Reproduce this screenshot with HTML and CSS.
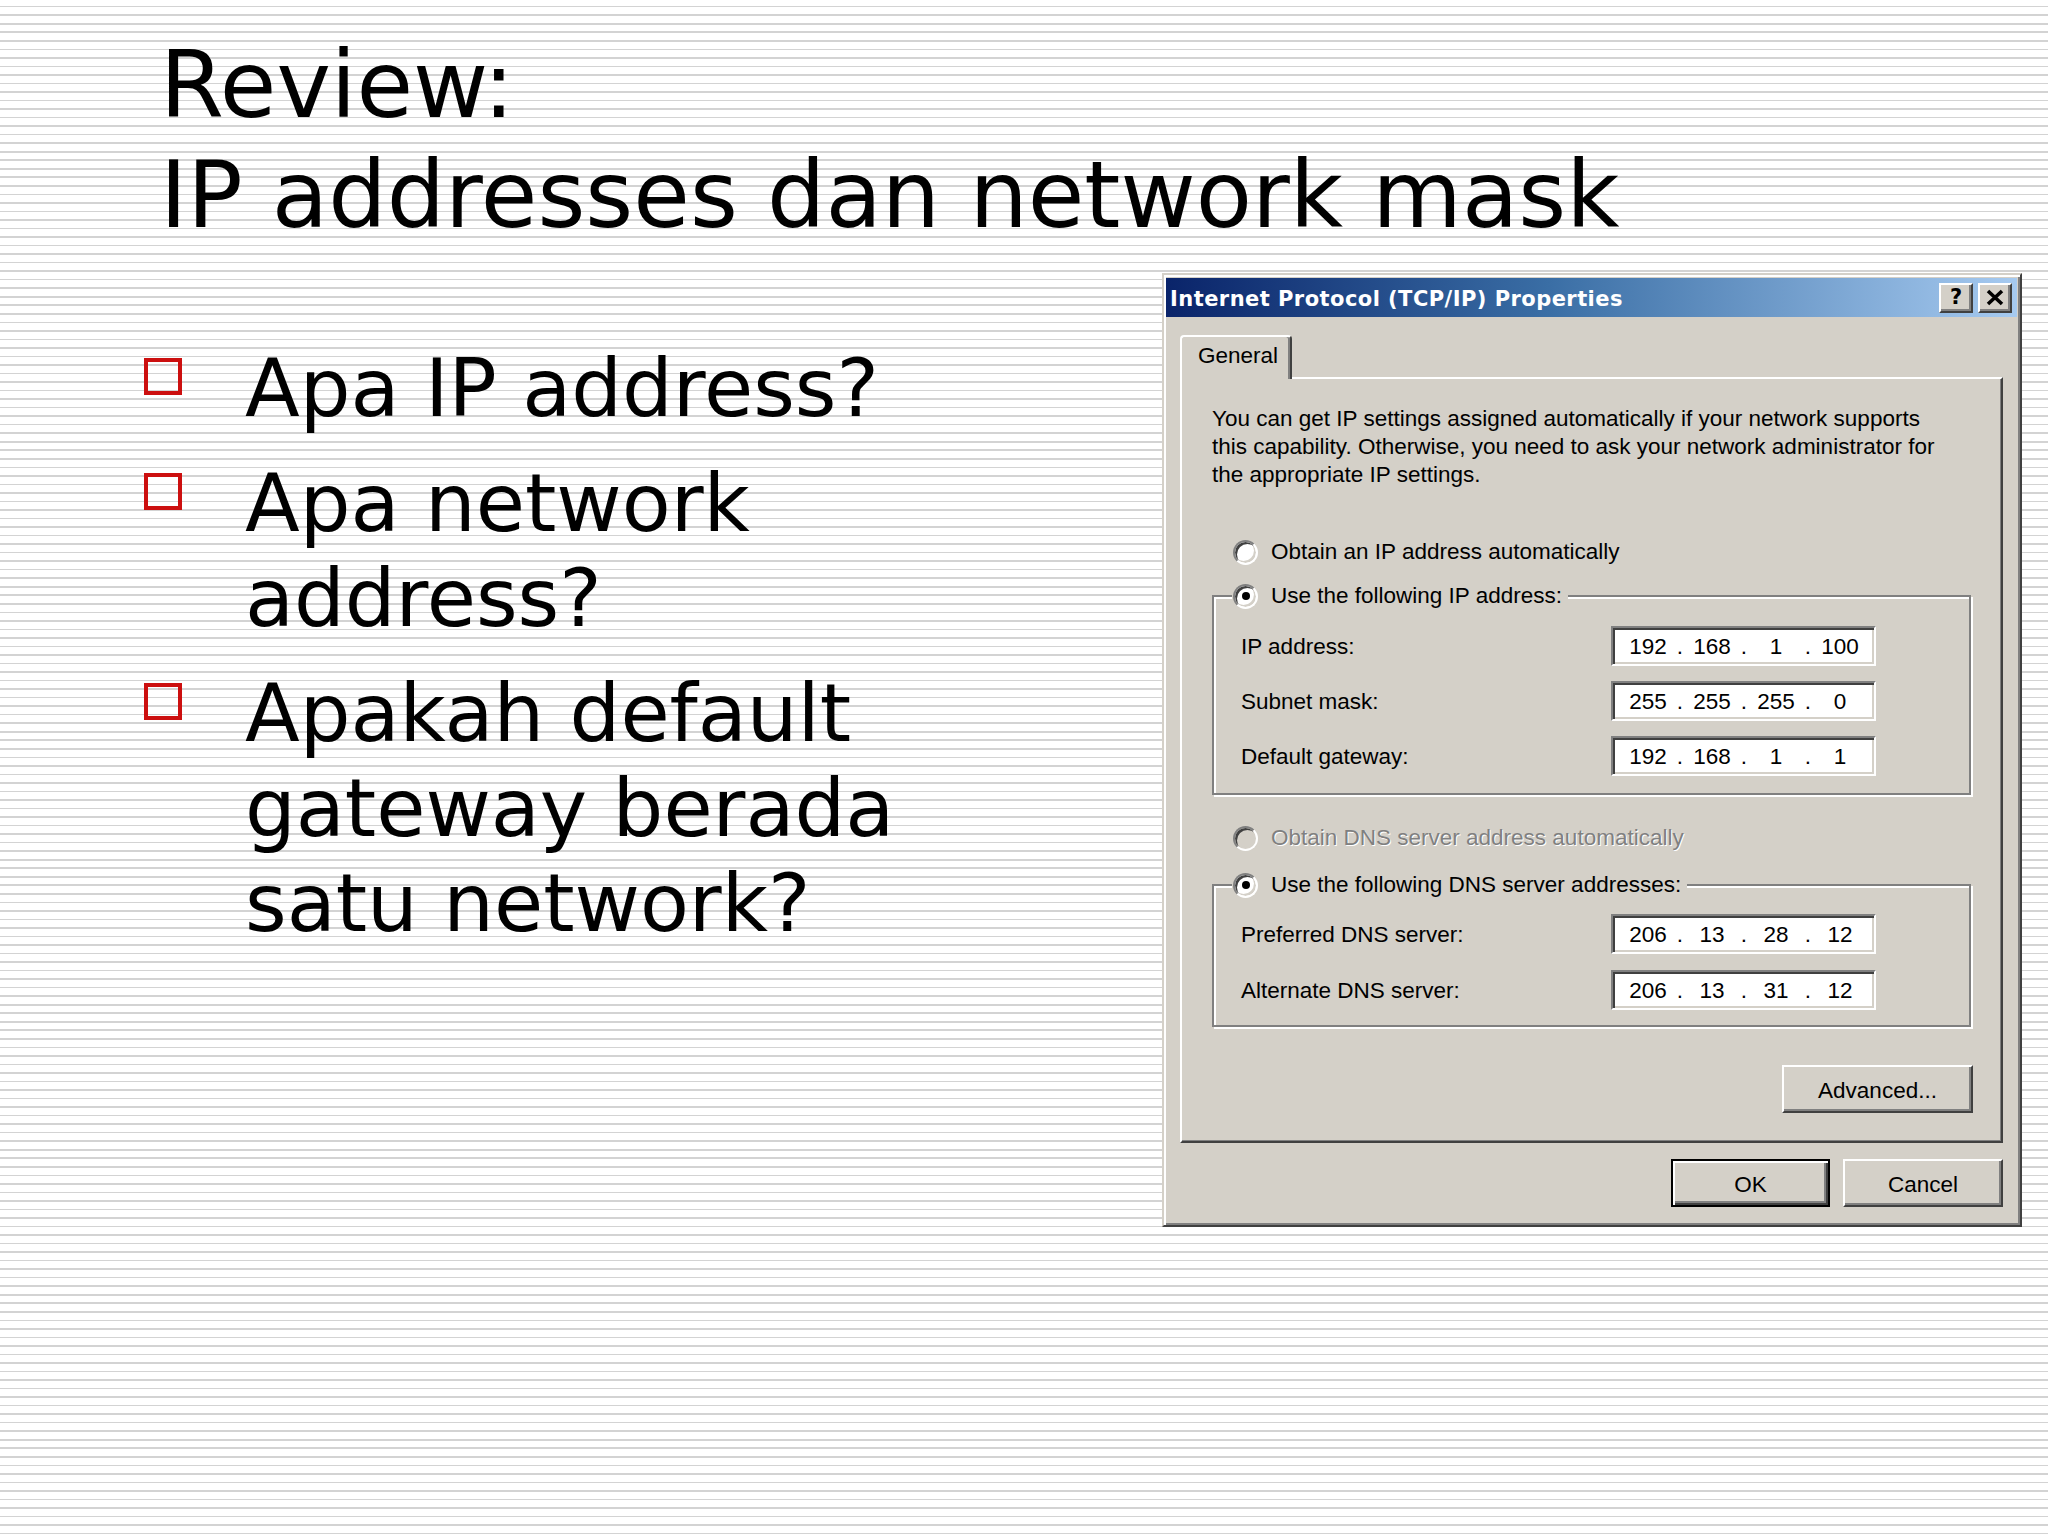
FILE: index.html
```html
<!DOCTYPE html>
<html lang="id">
<head>
<meta charset="utf-8">
<title>Review: IP addresses dan network mask</title>
<link rel="stylesheet" href="styles.css">
</head>
<body>
<div class="slide">
  <h1 class="title">Review:<br>IP addresses dan network mask</h1>
  <div class="content">
    <ul class="bullets">
      <li><span>Apa IP address?</span></li>
      <li><span>Apa network address?</span></li>
      <li><span>Apakah default gateway berada satu network?</span></li>
    </ul>

    <div class="dialog">
      <div class="titlebar">
        <span class="title-text">Internet Protocol (TCP/IP) Properties</span>
        <div class="caption-buttons">
          <span class="cap-btn help">?</span>
          <span class="cap-btn close"><svg width="20" height="17" viewBox="0 0 20 17"><path d="M3 2 L17 15 M17 2 L3 15" stroke="#000" stroke-width="3.6" fill="none"/></svg></span>
        </div>
      </div>
      <div class="dlg-body">
        <div class="tabs"><div class="tab">General</div></div>
        <div class="panel">
          <p class="desc">You can get IP settings assigned automatically if your network supports<br>this capability. Otherwise, you need to ask your network administrator for<br>the appropriate IP settings.</p>

          <div class="radio-row r-ip"><span class="radio"></span><span class="rlabel">Obtain an IP address automatically</span></div>

          <div class="group g-ip">
            <div class="legend"><span class="radio checked"></span><span class="rlabel">Use the following IP address:</span></div>
            <div class="field-row first"><span class="flabel">IP address:</span>
              <div class="ipbox"><span class="oct">192</span><span class="dot">.</span><span class="oct">168</span><span class="dot">.</span><span class="oct">1</span><span class="dot">.</span><span class="oct">100</span></div></div>
            <div class="field-row"><span class="flabel">Subnet mask:</span>
              <div class="ipbox"><span class="oct">255</span><span class="dot">.</span><span class="oct">255</span><span class="dot">.</span><span class="oct">255</span><span class="dot">.</span><span class="oct">0</span></div></div>
            <div class="field-row"><span class="flabel">Default gateway:</span>
              <div class="ipbox"><span class="oct">192</span><span class="dot">.</span><span class="oct">168</span><span class="dot">.</span><span class="oct">1</span><span class="dot">.</span><span class="oct">1</span></div></div>
          </div>

          <div class="radio-row r-dns disabled"><span class="radio"></span><span class="rlabel">Obtain DNS server address automatically</span></div>

          <div class="group g-dns">
            <div class="legend"><span class="radio checked"></span><span class="rlabel">Use the following DNS server addresses:</span></div>
            <div class="field-row first"><span class="flabel">Preferred DNS server:</span>
              <div class="ipbox"><span class="oct">206</span><span class="dot">.</span><span class="oct">13</span><span class="dot">.</span><span class="oct">28</span><span class="dot">.</span><span class="oct">12</span></div></div>
            <div class="field-row dns2"><span class="flabel">Alternate DNS server:</span>
              <div class="ipbox"><span class="oct">206</span><span class="dot">.</span><span class="oct">13</span><span class="dot">.</span><span class="oct">31</span><span class="dot">.</span><span class="oct">12</span></div></div>
          </div>

          <div class="adv-row"><span class="btn adv">Advanced...</span></div>
        </div>
        <div class="buttons"><span class="btn ok">OK</span><span class="btn cancel">Cancel</span></div>
      </div>
    </div>
  </div>
</div>
</body>
</html>
```

FILE: styles.css
```css
body {
  margin: 0;
}

.slide {
  width: 2048px;
  height: 1536px;
  box-sizing: border-box;
  padding: 31px 26px 0 0;
  overflow: hidden;
  color: #000;
  font-family: "DejaVu Sans", Verdana, sans-serif;
  background: repeating-linear-gradient(to bottom,
    #ffffff 0px, #ffffff 5.9px,
    #d3d3d3 5.9px, #d3d3d3 7.5px,
    #ffffff 7.5px, #ffffff 8.53px);
}

.title {
  margin: 0 0 0 160px;
  font-weight: 400;
  font-size: 92px;
  line-height: 110px;
}

.content {
  display: flex;
  justify-content: space-between;
  align-items: flex-start;
  margin-top: 1px;
}

/* Bullets */
.bullets {
  list-style: none;
  margin: 89px 0 0 144px;
  padding: 0;
}

.bullets li {
  display: flex;
  align-items: flex-start;
  font-size: 80px;
  line-height: 95px;
  margin-bottom: 20px;
}

.bullets li::before {
  content: "";
  flex: none;
  width: 38px;
  height: 37px;
  box-sizing: border-box;
  border: 4px solid #cc0f0f;
  margin-top: 17px;
  margin-right: 63px;
}

.bullets li span {
  width: 700px;
}

/* Dialog */
.dialog {
  margin-top: 21px;
  width: 860px;
  height: 954px;
  box-sizing: border-box;
  background: #d4d0c8;
  border: 2px solid;
  border-color: #d4d0c8 #404040 #404040 #d4d0c8;
  box-shadow: inset 2px 2px #ffffff, inset -2px -2px #808080;
  padding: 3px 3px 0 2px;
  font-family: "Liberation Sans", Arial, sans-serif;
  font-size: 22.5px;
  line-height: 26px;
  color: #000;
}

.titlebar {
  height: 39px;
  display: flex;
  align-items: center;
  padding: 0 5px 0 4px;
  background: linear-gradient(to right, #0a246a 0%, #3a6ea5 45%, #a6caf0 100%);
}

.title-text {
  color: #fff;
  font-family: "DejaVu Sans", Verdana, sans-serif;
  font-weight: 700;
  font-size: 21px;
  letter-spacing: 0.45px;
  padding-top: 3px;
  white-space: nowrap;
}

.caption-buttons {
  margin-left: auto;
  display: flex;
  gap: 5px;
}

.cap-btn {
  width: 34px;
  height: 30px;
  box-sizing: border-box;
  display: flex;
  align-items: center;
  justify-content: center;
  background: #d4d0c8;
  border: 2px solid;
  border-color: #ffffff #404040 #404040 #ffffff;
  box-shadow: inset -2px -2px #808080;
}

.help {
  font-family: "DejaVu Sans", Verdana, sans-serif;
  font-weight: 700;
  font-size: 21px;
  line-height: 1;
  padding-bottom: 1px;
}

.close svg {
  display: block;
}

.dlg-body {
  padding: 18px 14px 0 14px;
}

.tabs {
  display: flex;
}

.tab {
  position: relative;
  z-index: 1;
  width: 112px;
  height: 44px;
  box-sizing: border-box;
  margin-bottom: -2px;
  padding: 6px 0 0 16px;
  background: #d4d0c8;
  border: 2px solid;
  border-bottom: none;
  border-color: #ffffff #404040 transparent #ffffff;
  border-radius: 4px 4px 0 0;
  box-shadow: inset -2px 0 #808080;
}

.panel {
  height: 766px;
  box-sizing: border-box;
  padding: 26px 30px 0 30px;
  border: 2px solid;
  border-color: #ffffff #404040 #404040 #ffffff;
  box-shadow: inset -1px -1px #808080;
}

.desc {
  margin: 0;
  line-height: 28px;
  white-space: nowrap;
}

.radio-row {
  display: flex;
  align-items: center;
  height: 26px;
  padding-left: 21px;
}

.r-ip {
  margin-top: 50px;
}

.r-dns {
  margin-top: 30px;
}

.radio {
  flex: none;
  position: relative;
  width: 25px;
  height: 25px;
  box-sizing: border-box;
  border-radius: 50%;
  border: 2px solid;
  border-color: #808080 #ffffff #ffffff #808080;
  box-shadow: inset 2px 2px #404040, inset -2px -2px #d4d0c8;
  background: #ffffff;
  margin-right: 13px;
}

.radio.checked::after {
  content: "";
  position: absolute;
  left: 50%;
  top: 50%;
  width: 8px;
  height: 8px;
  margin: -4px 0 0 -4px;
  border-radius: 50%;
  background: #000;
}

.disabled .radio {
  background: #d4d0c8;
}

.disabled .rlabel {
  color: #808080;
  text-shadow: 1px 1px 0 #ffffff;
}

.rlabel {
  white-space: nowrap;
}

.group {
  border: 2px solid #808080;
  box-shadow: inset 2px 2px #ffffff, 2px 2px #ffffff;
  padding: 0 0 17px 27px;
}

.g-ip {
  margin-top: 30px;
}

.g-dns {
  margin-top: 33px;
  padding-bottom: 15px;
}

.legend {
  display: flex;
  align-items: center;
  width: max-content;
  height: 26px;
  margin: -14px 0 0 -9px;
  padding: 0 6px 0 1px;
  background: #d4d0c8;
}

.field-row {
  display: flex;
  align-items: baseline;
  margin-top: 15px;
}

.field-row.first {
  margin-top: 17px;
}

.g-dns .field-row.first {
  margin-top: 16px;
}

.g-dns .dns2 {
  margin-top: 16px;
}

.flabel {
  width: 370px;
  flex: none;
  white-space: nowrap;
}

.ipbox {
  display: flex;
  align-items: center;
  width: 265px;
  height: 40px;
  box-sizing: border-box;
  padding: 1px 0 0 10px;
  background: #ffffff;
  border: 2px solid;
  border-color: #808080 #ffffff #ffffff #808080;
  box-shadow: inset 2px 2px #404040, inset -2px -2px #d4d0c8;
}

.oct {
  width: 50px;
  text-align: center;
}

.dot {
  width: 14px;
  text-align: center;
}

.adv-row {
  display: flex;
  justify-content: flex-end;
  margin: 38px -2px 0 0;
}

.btn {
  display: flex;
  align-items: center;
  justify-content: center;
  height: 48px;
  box-sizing: border-box;
  padding-top: 3px;
  background: #d4d0c8;
  border: 2px solid;
  border-color: #ffffff #404040 #404040 #ffffff;
  box-shadow: inset -2px -2px #808080;
}

.adv {
  width: 191px;
}

.buttons {
  display: flex;
  justify-content: flex-end;
  gap: 13px;
  margin-top: 16px;
}

.ok {
  width: 159px;
  border-color: #000;
  box-shadow: inset 2px 2px #ffffff, inset -2px -2px #404040, inset -4px -4px #808080;
}

.cancel {
  width: 160px;
}
```
